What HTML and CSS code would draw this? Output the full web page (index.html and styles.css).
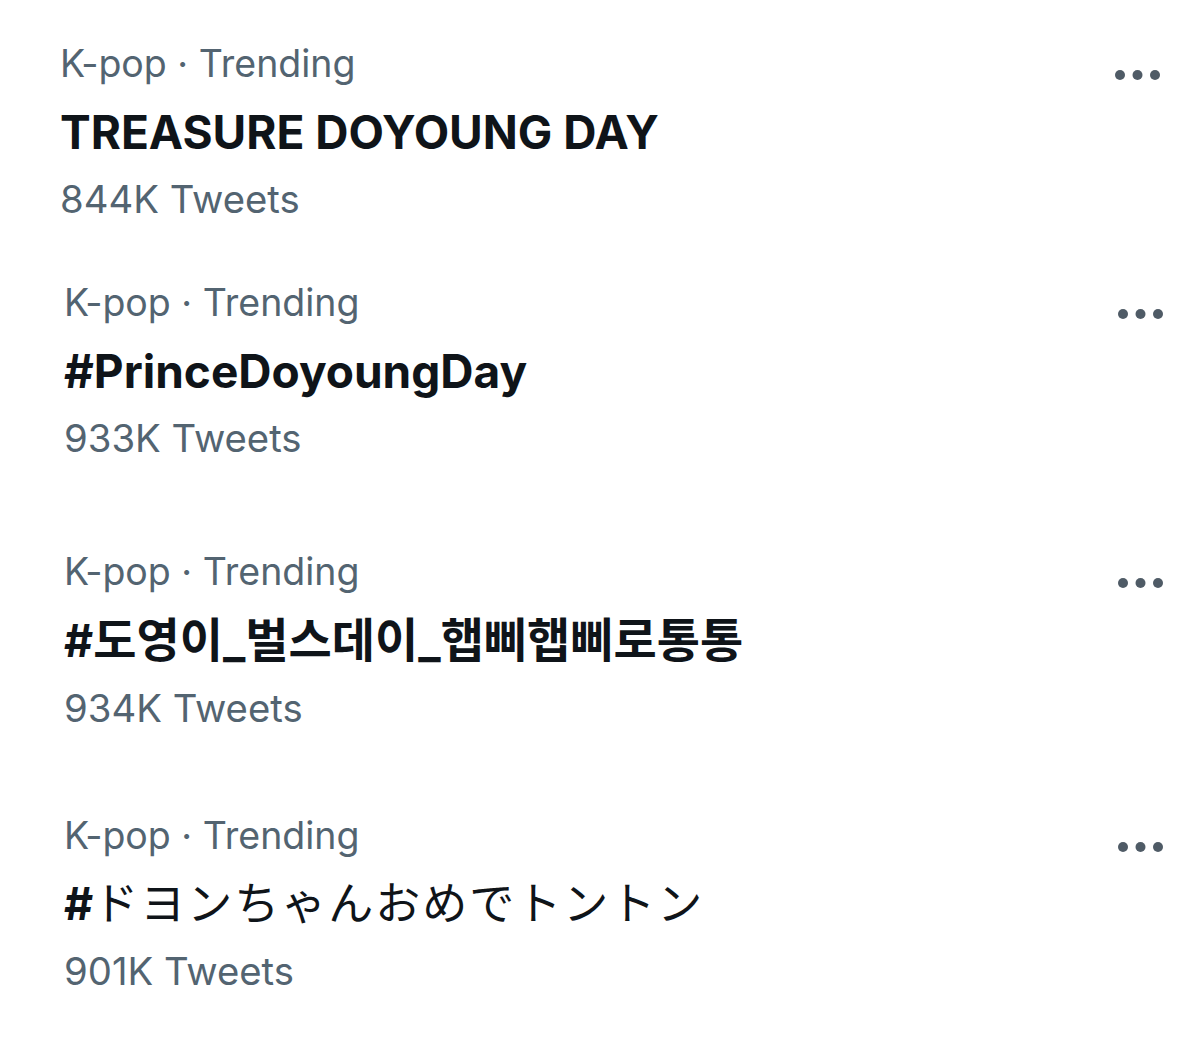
FILE: index.html
```html
<!DOCTYPE html>
<html lang="en">
<head>
<meta charset="utf-8">
<title>Trends</title>
<link rel="stylesheet" href="styles.css">
</head>
<body>
<main class="trends">
  <div class="trend trend--first">
    <div class="trend-text">
      <div class="trend-meta">K-pop · Trending</div>
      <div class="trend-title">TREASURE DOYOUNG DAY</div>
      <div class="trend-count">844K Tweets</div>
    </div>
    <div class="trend-more">
      <svg width="45" height="10" viewBox="0 0 45 10"><circle cx="5" cy="5" r="5"/><circle cx="22.5" cy="5" r="5"/><circle cx="40" cy="5" r="5"/></svg>
    </div>
  </div>
  <div class="trend trend--second">
    <div class="trend-text">
      <div class="trend-meta">K-pop · Trending</div>
      <div class="trend-title">#PrinceDoyoungDay</div>
      <div class="trend-count">933K Tweets</div>
    </div>
    <div class="trend-more">
      <svg width="45" height="10" viewBox="0 0 45 10"><circle cx="5" cy="5" r="5"/><circle cx="22.5" cy="5" r="5"/><circle cx="40" cy="5" r="5"/></svg>
    </div>
  </div>
  <div class="trend trend--third">
    <div class="trend-text">
      <div class="trend-meta">K-pop · Trending</div>
      <div class="trend-title trend-title--ko" lang="ko">#<span class="ko-text">도영이_벌스데이_햅삐햅삐로통통</span></div>
      <div class="trend-count">934K Tweets</div>
    </div>
    <div class="trend-more">
      <svg width="45" height="10" viewBox="0 0 45 10"><circle cx="5" cy="5" r="5"/><circle cx="22.5" cy="5" r="5"/><circle cx="40" cy="5" r="5"/></svg>
    </div>
  </div>
  <div class="trend trend--fourth">
    <div class="trend-text">
      <div class="trend-meta">K-pop · Trending</div>
      <div class="trend-title trend-title--ja" lang="ja">#<span class="ja-text">ドヨンちゃんおめでトントン</span></div>
      <div class="trend-count">901K Tweets</div>
    </div>
    <div class="trend-more">
      <svg width="45" height="10" viewBox="0 0 45 10"><circle cx="5" cy="5" r="5"/><circle cx="22.5" cy="5" r="5"/><circle cx="40" cy="5" r="5"/></svg>
    </div>
  </div>
</main>
</body>
</html>
```

FILE: styles.css
```css
html, body {
  margin: 0;
  padding: 0;
  background: #ffffff;
}

body {
  font-family: Inter, Roboto, "Noto Sans", "Noto Sans CJK KR", "Noto Sans CJK JP", sans-serif;
  color: #0f1419;
}

.trends {
  display: flex;
  flex-direction: column;
  padding: 30px 37px 0 64px;
}

.trend {
  display: flex;
  justify-content: space-between;
  align-items: flex-start;
}

.trend--first {
  margin-left: -4px;
  margin-right: 3px;
}

.trend--second {
  margin-top: 36px;
}

.trend--third {
  margin-top: 66px;
}

.trend--fourth {
  margin-top: 60px;
}

.trend-text {
  display: flex;
  flex-direction: column;
}

.trend-meta,
.trend-count {
  font-size: 37.5px;
  line-height: 68px;
  color: #536471;
  white-space: nowrap;
}

.trend-count {
  font-size: 38.3px;
  line-height: 67px;
}

.trend-title {
  font-size: 46px;
  line-height: 68px;
  font-weight: 700;
  color: #0f1419;
  white-space: nowrap;
}

.trend-title--ko {
  font-family: Inter, "Noto Sans CJK KR", sans-serif;
  font-size: 45px;
}

.ko-text {
  font-size: 47px;
}

.trend-title--ja {
  font-family: Inter, "Noto Sans CJK JP", sans-serif;
  font-size: 45px;
}

.ja-text {
  font-weight: 400;
  letter-spacing: 2px;
}

.trend-more {
  padding-top: 40px;
  display: flex;
}

.trend-more svg {
  display: block;
  fill: #4f5b66;
}
```
